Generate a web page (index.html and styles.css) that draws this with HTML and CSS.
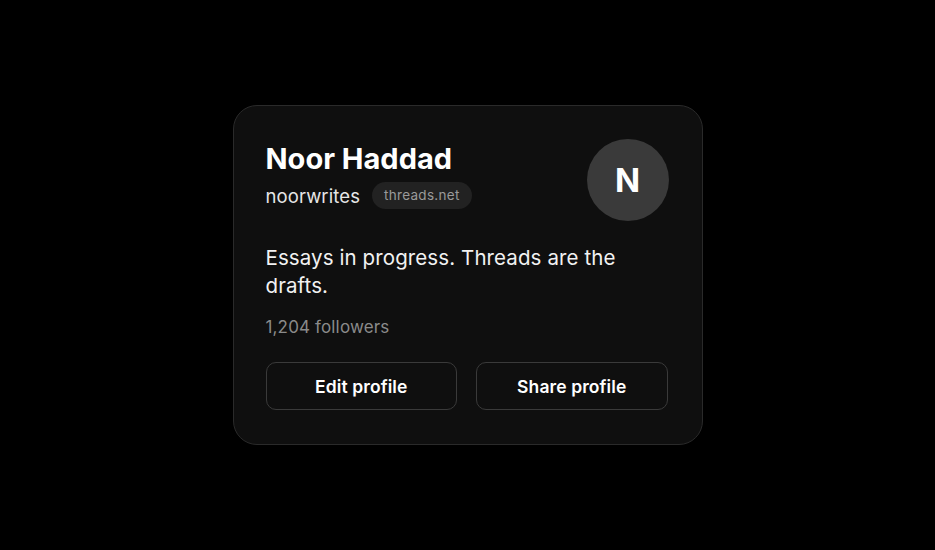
FILE: index.html
```html
<!DOCTYPE html>
<html lang="en">
<head>
<meta charset="utf-8">
<title>Profile card</title>
<link rel="stylesheet" href="styles.css">
</head>
<body>
<main class="stage">
  <section class="card">
    <div class="head">
      <div class="ident">
        <h1 class="name">Noor Haddad</h1>
        <div class="handle-row">
          <span class="handle">noorwrites</span>
          <span class="badge">threads.net</span>
        </div>
      </div>
      <div class="avatar">N</div>
    </div>
    <p class="bio">Essays in progress. Threads are the drafts.</p>
    <p class="followers">1,204 followers</p>
    <div class="actions">
      <button class="btn">Edit profile</button>
      <button class="btn">Share profile</button>
    </div>
  </section>
</main>
</body>
</html>
```
FILE: styles.css
```css
* { box-sizing: border-box; }
html, body { margin: 0; height: 100%; background: #000; }
body { font-family: Inter, "Noto Sans", sans-serif; color: #fff; }
.stage {
  height: 550px;
  display: flex;
  align-items: center;
  justify-content: center;
}
.card {
  width: 470px;
  background: #0f0f0f;
  border: 1px solid #2a2a2a;
  border-radius: 24px;
  padding: 33px 33px 34px 32px;
}
.head {
  display: flex;
  justify-content: space-between;
  align-items: flex-start;
}
.ident { padding-top: 2px; }
.name {
  margin: 0;
  font-size: 29px;
  font-weight: 700;
  line-height: 36px;
  letter-spacing: 0;
}
.handle-row {
  display: flex;
  align-items: center;
  gap: 12px;
  margin-top: 5px;
}
.handle {
  font-size: 18.5px;
  color: #e6e6e6;
  letter-spacing: 0.1px;
}
.badge {
  font-size: 13.5px;
  color: #9a9a9a;
  background: #222;
  border-radius: 14px;
  padding: 0 12px;
  height: 27px;
  line-height: 27px;
  letter-spacing: 0.3px;
}
.avatar {
  width: 82px;
  height: 82px;
  border-radius: 50%;
  background: #3a3a3a;
  display: flex;
  align-items: center;
  justify-content: center;
  font-size: 33px;
  font-weight: 700;
}
.bio {
  margin: 23px 0 0;
  font-size: 20.5px;
  line-height: 28px;
  color: #f2f2f2;
  letter-spacing: 0.1px;
  max-width: 380px;
}
.followers {
  margin: 15px 0 0;
  font-size: 17px;
  line-height: 24px;
  color: #8a8a8a;
  letter-spacing: 0.15px;
}
.actions {
  display: grid;
  grid-template-columns: 1fr 1fr;
  gap: 19px;
  margin: 23px 1px 0 0;
}
.btn {
  height: 48px;
  background: transparent;
  border: 1px solid #3a3a3a;
  border-radius: 10px;
  color: #fff;
  font-family: inherit;
  font-size: 17.5px;
  font-weight: 600;
  letter-spacing: 0.1px;
}
```
